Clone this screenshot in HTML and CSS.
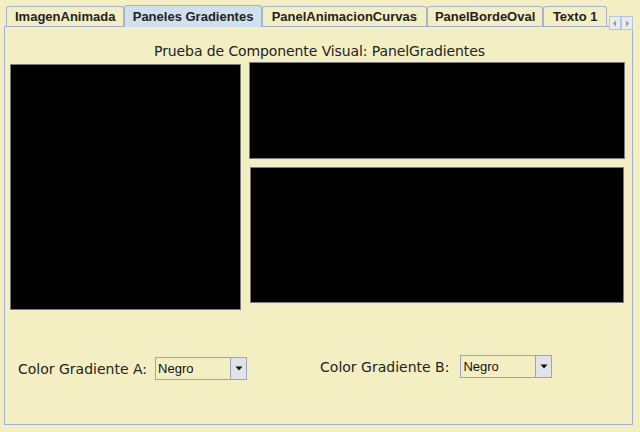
FILE: index.html
```html
<!DOCTYPE html>
<html>
<head>
<meta charset="utf-8">
<link rel="stylesheet" href="styles.css">
</head>
<body>
<div class="window">
  <div class="tabbar">
    <div class="tab t1">ImagenAnimada</div>
    <div class="tab t2 selected">Paneles Gradientes</div>
    <div class="tab t3">PanelAnimacionCurvas</div>
    <div class="tab t4">PanelBordeOval</div>
    <div class="tab t5">Texto 1</div>
    <div class="scrollbtns">
      <span class="sb"><svg width="6" height="7" viewBox="0 0 6 7"><path d="M4 0.5 L1 3.5 L4 6.5 Z" fill="#8a9ab8"/></svg></span>
      <span class="sb"><svg width="6" height="7" viewBox="0 0 6 7"><path d="M2 0.5 L5 3.5 L2 6.5 Z" fill="#8a9ab8"/></svg></span>
    </div>
  </div>
  <div class="panel">
    <div class="title">Prueba de Componente Visual: PanelGradientes</div>
    <div class="grads">
      <div class="grad left"></div>
      <div class="rightcol">
        <div class="grad rtop"></div>
        <div class="grad rbot"></div>
      </div>
    </div>
    <div class="controls">
      <div class="ctrl a">
        <span class="lbl">Color Gradiente A:</span>
        <div class="combo"><span class="val">Negro</span><span class="arrow"><svg width="8" height="5" viewBox="0 0 8 5"><path d="M0.5 0.5 H7.5 L4 4.5 Z" fill="#111"/></svg></span></div>
      </div>
      <div class="ctrl b">
        <span class="lbl">Color Gradiente B:</span>
        <div class="combo"><span class="val">Negro</span><span class="arrow"><svg width="8" height="5" viewBox="0 0 8 5"><path d="M0.5 0.5 H7.5 L4 4.5 Z" fill="#111"/></svg></span></div>
      </div>
    </div>
  </div>
</div>
</body>
</html>
```

FILE: styles.css
```css
html, body {
  margin: 0;
  padding: 0;
  width: 640px;
  height: 432px;
  overflow: hidden;
  background: #f4efc3;
  font-family: "DejaVu Sans", "Liberation Sans", sans-serif;
}
.window {
  width: 640px;
  height: 432px;
  padding: 4px 7px 0 4px;
  box-sizing: border-box;
  display: flex;
  flex-direction: column;
}
.tabbar {
  display: flex;
  align-items: flex-end;
  height: 22px;
  padding-left: 2px;
  position: relative;
  z-index: 1;
}
.tab {
  font-family: "Liberation Sans", Arial, sans-serif;
  font-weight: bold;
  font-size: 13px;
  color: #222;
  height: 20px;
  line-height: 20px;
  border: 1px solid #a5b3cf;
  border-bottom: none;
  border-radius: 3px 3px 0 0;
  background: #f4efc3;
  text-align: center;
  box-sizing: border-box;
}
.t1 { width: 119px; }
.t2 { width: 138px; }
.t3 { width: 166px; }
.t4 { width: 117px; }
.t5 { width: 64px; }
.tab.selected {
  background: #cfe0ef;
  height: 22px;
  line-height: 22px;
  margin-bottom: -1px;
  padding-bottom: 1px;
}
.scrollbtns {
  display: flex;
  margin-left: 2px;
  margin-bottom: -4px;
}
.sb {
  width: 10px;
  height: 12px;
  border: 1px solid #b8c4da;
  background: #e8ecef;
  display: flex;
  align-items: center;
  justify-content: center;
}
.panel {
  border: 1px solid #a0b0d2;
  height: 399px;
  box-sizing: border-box;
  display: flex;
  flex-direction: column;
}
.title {
  font-size: 14px;
  color: #222;
  text-align: center;
  margin-top: 14px;
  height: 20px;
  line-height: 20px;
  padding-left: 2px;
  letter-spacing: -0.1px;
}
.grads {
  display: flex;
  align-items: flex-start;
  margin-top: 1px;
  padding-left: 5px;
}
.grad {
  background: #000;
  border: 1px solid #7c7c7c;
  box-sizing: border-box;
}
.left {
  width: 231px;
  height: 246px;
  margin-top: 2px;
}
.rightcol {
  display: flex;
  flex-direction: column;
  margin-left: 8px;
}
.rtop {
  width: 376px;
  height: 97px;
}
.rbot {
  width: 374px;
  height: 136px;
  margin-top: 8px;
  margin-left: 1px;
}
.controls {
  display: flex;
  align-items: flex-start;
  margin-top: 45px;
}
.ctrl {
  display: flex;
  align-items: center;
}
.ctrl.a { margin-left: 13px; margin-top: 2px; }
.ctrl.b { margin-left: 73px; }
.lbl {
  font-size: 14px;
  color: #222;
}
.ctrl.a .combo { margin-left: 8px; }
.ctrl.b .combo { margin-left: 11px; }
.combo {
  width: 92px;
  height: 23px;
  border: 1px solid #9aa6bf;
  box-sizing: border-box;
  background: #f4efc3;
  display: flex;
}
.val {
  flex: 1;
  font-family: "Liberation Sans", Arial, sans-serif;
  font-size: 13px;
  color: #111;
  line-height: 21px;
  padding-left: 2px;
}
.arrow {
  width: 15px;
  border-left: 1px solid #9aa6bf;
  background: #dfe4ea;
  display: flex;
  align-items: center;
  justify-content: center;
}
```
